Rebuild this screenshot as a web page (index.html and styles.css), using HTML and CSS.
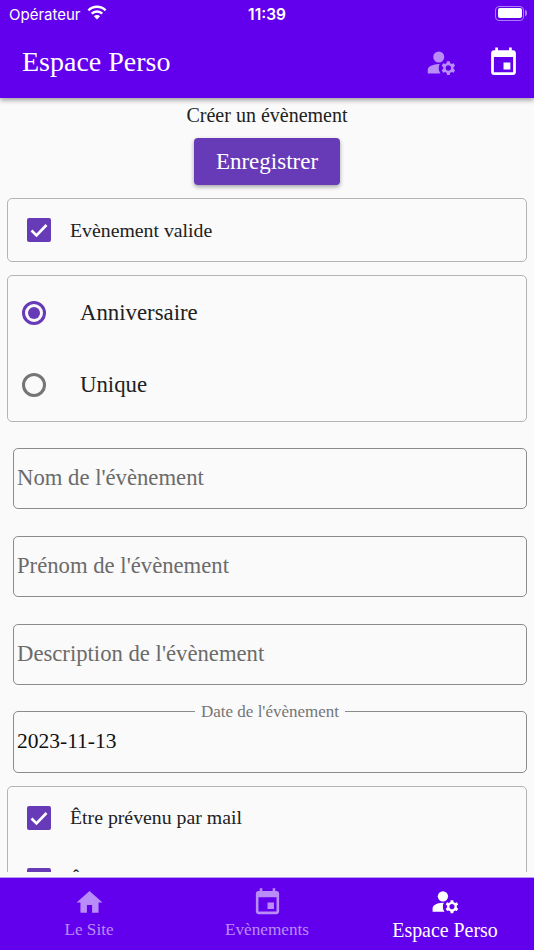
FILE: index.html
```html
<!DOCTYPE html>
<html lang="fr">
<head>
<meta charset="utf-8">
<title>Espace Perso</title>
<link rel="stylesheet" href="styles.css">
</head>
<body>
<svg class="defs" width="0" height="0">
  <symbol id="i-user" viewBox="0 0 24 24"><circle cx="10" cy="8" r="4"/><path d="M10.67 13.02C10.45 13.01 10.23 13 10 13c-2.42 0-4.68.67-6.61 1.82C2.51 15.34 2 16.32 2 17.35V20h9.26c-.79-1.13-1.26-2.51-1.26-4 0-1.07.25-2.07.67-2.98z"/><path d="M20.75 16c0-.22-.03-.42-.06-.63l1.14-1.01-1-1.73-1.45.49c-.32-.27-.68-.48-1.08-.63L18 11h-2l-.3 1.49c-.4.15-.76.36-1.08.63l-1.45-.49-1 1.73 1.14 1.01c-.03.21-.06.41-.06.63s.03.42.06.63l-1.14 1.01 1 1.73 1.45-.49c.32.27.68.48 1.08.63L16 21h2l.3-1.49c.4-.15.76-.36 1.08-.63l1.45.49 1-1.73-1.14-1.01c.03-.21.06-.41.06-.63zM17 18c-1.1 0-2-.9-2-2s.9-2 2-2 2 .9 2 2-.9 2-2 2z"/></symbol>
  <symbol id="i-event" viewBox="0 0 24 24"><path d="M17 12h-5v5h5v-5zM16 1v2H8V1H6v2H5c-1.11 0-1.99.9-1.99 2L3 19c0 1.1.89 2 2 2h14c1.1 0 2-.9 2-2V5c0-1.1-.9-2-2-2h-1V1h-2zm3 18H5V8h14v11z"/></symbol>
  <symbol id="i-home" viewBox="0 0 24 24"><path d="M10 20v-6h4v6h5v-8h3L12 3 2 12h3v8z"/></symbol>
  <symbol id="i-check" viewBox="0 0 24 24"><path d="M4.500 12.500l5 5 10-10.500" fill="none" stroke="#fff" stroke-width="2.600"/></symbol>
</svg>

<header class="top">
  <div class="status">
    <div class="status-left">
      <span>Opérateur</span>
      <svg class="wifi" viewBox="0 0 20 15">
        <path class="wifi-arc" d="M1.400 5.300a12.200 12.200 0 0 1 17.200 0"/>
        <path class="wifi-arc" d="M4.700 8.700a7.500 7.500 0 0 1 10.600 0"/>
        <path class="wifi-dot" d="M10 14.500l-3.100-3.200a4.400 4.400 0 0 1 6.200 0z"/>
      </svg>
    </div>
    <span class="clock">11:39</span>
    <div class="battery"><span class="battery-level"></span></div>
  </div>
  <div class="appbar">
    <h1 class="app-title">Espace Perso</h1>
    <div class="app-actions">
      <svg class="app-icon dim"><use href="#i-user"/></svg>
      <svg class="app-icon"><use href="#i-event"/></svg>
    </div>
  </div>
</header>

<main class="content">
  <p class="page-title">Créer un évènement</p>
  <div class="save-row"><button class="save" type="button">Enregistrer</button></div>

  <section class="card card-valid">
    <div class="check-row">
      <span class="checkbox"><svg><use href="#i-check"/></svg></span>
      <span class="check-label">Evènement valide</span>
    </div>
  </section>

  <section class="card card-radio">
    <div class="radio-row"><span class="radio on"></span><span class="radio-label">Anniversaire</span></div>
    <div class="radio-row"><span class="radio"></span><span class="radio-label">Unique</span></div>
  </section>

  <div class="fields">
    <div class="field"><span class="placeholder">Nom de l'évènement</span></div>
    <div class="field"><span class="placeholder">Prénom de l'évènement</span></div>
    <div class="field"><span class="placeholder">Description de l'évènement</span></div>
    <div class="field field-date">
      <span class="legend">Date de l'évènement</span>
      <span class="value">2023-11-13</span>
    </div>
  </div>

  <section class="card card-mail">
    <div class="check-row">
      <span class="checkbox"><svg><use href="#i-check"/></svg></span>
      <span class="check-label">Être prévenu par mail</span>
    </div>
    <div class="check-row">
      <span class="checkbox"><svg><use href="#i-check"/></svg></span>
      <span class="check-label">Être prévenu par SMS</span>
    </div>
  </section>
</main>

<nav class="tabs">
  <div class="tab"><svg class="tab-icon"><use href="#i-home"/></svg><span>Le Site</span></div>
  <div class="tab"><svg class="tab-icon"><use href="#i-event"/></svg><span>Evènements</span></div>
  <div class="tab active"><svg class="tab-icon"><use href="#i-user"/></svg><span>Espace Perso</span></div>
</nav>
</body>
</html>
```

FILE: styles.css
```css
* { box-sizing: border-box; }
html, body { margin: 0; height: 100%; }
body {
  width: 534px;
  height: 950px;
  display: flex;
  flex-direction: column;
  overflow: hidden;
  background: #fafafa;
  color: #212121;
  font-family: "Liberation Serif", "Times New Roman", serif;
}
.defs { position: absolute; }

.top {
  flex: none;
  height: 98px;
  background: #6200ee;
  color: #fff;
  box-shadow: 0 2px 5px rgba(0,0,0,.4);
  position: relative;
  z-index: 2;
}
.status {
  height: 28px;
  padding: 0 9px;
  display: grid;
  grid-template-columns: 1fr auto 1fr;
  align-items: center;
  font-family: Inter, "Liberation Sans", Arial, sans-serif;
  font-size: 15px;
}
.status-left { display: flex; align-items: center; gap: 6px; }
.wifi { width: 20px; height: 15px; margin-top: -3px; }
.wifi-arc { fill: none; stroke: #fff; stroke-width: 2.500; }
.wifi-dot { fill: #fff; }
.clock { font-weight: 600; font-size: 15.500px; }
.battery {
  justify-self: end;
  position: relative;
  width: 29px;
  height: 15px;
  border: 1.500px solid #a77df5;
  border-radius: 4px;
  padding: 1.500px;
  margin: -2px 1px 0 0;
}
.battery::after {
  content: "";
  position: absolute;
  right: -4px;
  top: 3px;
  width: 2px;
  height: 6px;
  border-radius: 0 2px 2px 0;
  background: #a77df5;
}
.battery-level { display: block; height: 100%; background: #fff; border-radius: 2px; }
.appbar {
  height: 70px;
  padding: 0 14px 2px 22px;
  display: flex;
  align-items: center;
  justify-content: space-between;
}
.app-title { margin: 0; font-size: 28px; font-weight: 400; }
.app-actions { display: flex; gap: 29px; }
.app-icon { width: 33px; height: 33px; fill: #fff; }
.app-icon.dim { fill: #b98cf8; }

.content { flex: 1; min-height: 0; overflow: hidden; padding: 0 7px; margin-bottom: 5px; }
.page-title { margin: 7px 0 0; height: 20px; line-height: 20px; text-align: center; font-size: 20px; }
.save-row { display: flex; justify-content: center; margin-top: 13px; }
.save {
  width: 146px;
  height: 47px;
  border: 0;
  border-radius: 4px;
  background: #673ab7;
  color: #fff;
  font: inherit;
  font-size: 23px;
  box-shadow: 0 2px 4px rgba(0,0,0,.35);
}
.card {
  border: 1px solid #b4b4b4;
  border-radius: 5px;
  width: 520px;
}
.card-valid { margin-top: 13px; height: 64px; padding: 0 19px; display: flex; align-items: center; }
.check-row { display: flex; align-items: center; gap: 19px; height: 62px; }
.checkbox { flex: none; width: 24px; height: 24px; border-radius: 2px; background: #673ab7; }
.checkbox svg { display: block; width: 24px; height: 24px; }
.check-label { font-size: 19.800px; }
.card-radio { margin-top: 13px; height: 147px; padding: 1px 14px; }
.radio-row { display: flex; align-items: center; height: 72px; }
.radio {
  flex: none;
  width: 24px;
  height: 24px;
  border: 3px solid #757575;
  border-radius: 50%;
  margin-right: 34px;
  display: grid;
  place-items: center;
}
.radio.on { border-color: #673ab7; }
.radio.on::after { content: ""; width: 12px; height: 12px; border-radius: 50%; background: #673ab7; }
.radio-label { font-size: 22.800px; }

.fields { margin: 26px 0 0 6px; display: flex; flex-direction: column; gap: 26.400px; width: 514px; }
.field {
  position: relative;
  height: 61.400px;
  border: 1px solid #8c8c8c;
  border-radius: 5px;
  padding: 0 3px 1px;
  display: flex;
  align-items: center;
  font-size: 22.700px;
}
.placeholder { color: #6b6b6b; }
.field-date { color: #111; font-size: 21.500px; }
.legend {
  position: absolute;
  top: -9px;
  left: 181px;
  padding: 0 6px;
  background: #fafafa;
  color: #757575;
  font-size: 17px;
  line-height: 17px;
}
.card-mail { margin-top: 13px; padding: 0 19px; height: 130px; }

.tabs {
  flex: none;
  height: 73px;
  background: #6200ee;
  border-top: 1px solid #b99bf0;
  display: grid;
  grid-template-columns: repeat(3, 1fr);
  position: relative;
  z-index: 2;
}
.tab {
  display: flex;
  flex-direction: column;
  align-items: center;
  padding-top: 9px;
  color: #b98cf8;
  font-size: 17.200px;
  line-height: 20px;
}
.tab-icon { width: 31px; height: 31px; fill: currentColor; margin-bottom: 2px; }
.tab.active { color: #fff; font-size: 19.900px; line-height: 22px; padding-top: 8px; }
```
